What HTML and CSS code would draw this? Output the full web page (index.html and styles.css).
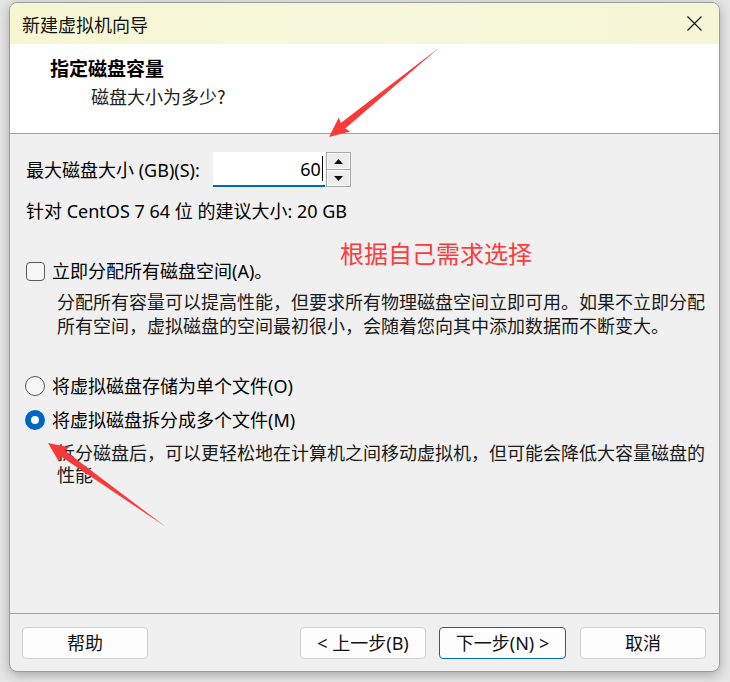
FILE: index.html
```html
<!DOCTYPE html>
<html lang="zh-CN">
<head>
<meta charset="utf-8">
<title>新建虚拟机向导</title>
<link rel="stylesheet" href="styles.css">
</head>
<body>
<div class="dialog">
  <div class="titlebar">
    <span class="title">新建虚拟机向导</span>
    <svg class="close" width="15" height="15" viewBox="0 0 15 15"><path d="M0.5 0.5 L14.5 14.5 M14.5 0.5 L0.5 14.5" stroke="#1a1a1a" stroke-width="1.3" fill="none"/></svg>
  </div>
  <div class="header">
    <div class="h-title">指定磁盘容量</div>
    <div class="h-sub">磁盘大小为多少?</div>
  </div>
  <div class="content">
    <div class="size-row">
      <span class="label">最大磁盘大小 (GB)(S):</span>
      <div class="spin">
        <div class="spin-input"><span>60</span><i class="caret"></i></div>
        <div class="spin-btns">
          <div class="sb"><svg width="9" height="5" viewBox="0 0 9 5"><path d="M0 5 L4.5 0 L9 5 Z" fill="#111"/></svg></div>
          <div class="sb"><svg width="9" height="5" viewBox="0 0 9 5"><path d="M0 0 L9 0 L4.5 5 Z" fill="#111"/></svg></div>
        </div>
      </div>
    </div>
    <div class="recommend">针对 CentOS 7 64 位 的建议大小: 20 GB</div>
    <div class="opt-row check-row"><span class="checkbox"></span><span>立即分配所有磁盘空间(A)。</span></div>
    <p class="desc d1">分配所有容量可以提高性能，但要求所有物理磁盘空间立即可用。如果不立即分配<br>所有空间，虚拟磁盘的空间最初很小，会随着您向其中添加数据而不断变大。</p>
    <div class="opt-row r1"><span class="radio"></span><span>将虚拟磁盘存储为单个文件(O)</span></div>
    <div class="opt-row r2"><span class="radio on"></span><span>将虚拟磁盘拆分成多个文件(M)</span></div>
    <p class="desc d2">拆分磁盘后，可以更轻松地在计算机之间移动虚拟机，但可能会降低大容量磁盘的<br>性能</p>
  </div>
  <div class="footer">
    <button class="btn help">帮助</button>
    <button class="btn back">&lt; 上一步(B)</button>
    <button class="btn next primary">下一步(N) &gt;</button>
    <button class="btn cancel">取消</button>
  </div>
</div>
<div class="note">根据自己需求选择</div>
<svg class="arrows" width="730" height="682" viewBox="0 0 730 682">
  <polygon points="440,47 340.8,122.9 338.8,117.4 329,137 350.2,131.4 345.2,128.4" fill="#fa3a3a"/>
  <polygon points="166,527 60.6,456.3 59.1,461.9 48,443 69.5,447.3 64.7,450.6" fill="#fa3a3a"/>
</svg>
</body>
</html>
```

FILE: styles.css
```css
* { box-sizing: border-box; }

html, body {
  margin: 0;
  padding: 0;
}

body {
  position: relative;
  width: 730px;
  height: 682px;
  overflow: hidden;
  background: #e6e6e6;
  font-family: "Noto Sans", "Noto Sans CJK SC", sans-serif;
  font-size: 18px;
  color: #000;
}

.dialog {
  margin: 2px 0 0 9px;
  width: 711px;
  height: 670px;
  border: 1px solid #9c9c9c;
  border-radius: 8px;
  background: #f0f0f0;
  overflow: hidden;
  display: flex;
  flex-direction: column;
  box-shadow: 0 3px 12px rgba(0, 0, 0, 0.28);
}

.titlebar {
  height: 41px;
  flex: none;
  display: flex;
  align-items: center;
  justify-content: space-between;
  padding: 0 17px 0 12px;
  background: linear-gradient(90deg, #f6f6d3 0%, #f7f7dc 50%, #f6f5d5 100%);
}

.title {
  font-family: "Noto Sans CJK SC", sans-serif;
  font-size: 18px;
  line-height: 20px;
  color: #111;
}

.close { display: block; }

.header {
  height: 90px;
  flex: none;
  background: #fff;
  border-bottom: 1px solid #a0a0a0;
  padding: 14px 0 0 40px;
}

.h-title {
  font-family: "Noto Sans CJK SC", sans-serif;
  font-weight: 700;
  font-size: 19px;
  line-height: 20px;
}

.h-sub {
  margin: 8px 0 0 41px;
  font-family: "Noto Sans CJK SC", sans-serif;
  font-size: 18px;
  line-height: 20px;
  color: #222;
}

.content {
  flex: 1;
  padding: 18px 0 0 16px;
}

.size-row {
  display: flex;
  align-items: center;
  height: 35px;
  gap: 13px;
}

.label, .recommend, .opt-row {
  line-height: 20px;
}

.spin {
  display: flex;
  gap: 1px;
  height: 35px;
}

.spin-input {
  width: 112px;
  height: 35px;
  background: #fff;
  border-bottom: 2px solid #0067c0;
  display: flex;
  align-items: center;
  justify-content: flex-end;
  padding-right: 2px;
  line-height: 20px;
}

.caret {
  display: block;
  width: 1px;
  height: 25px;
  background: #000;
  margin-left: 1px;
}

.spin-btns {
  width: 25px;
  height: 35px;
  border: 1px solid #a8a8a8;
  display: flex;
  flex-direction: column;
  gap: 1px;
  background: #a8a8a8;
}

.sb {
  flex: 1;
  background: #ececec;
  border: 1px solid #f8f8f8;
  display: flex;
  align-items: center;
  justify-content: center;
}

.sb svg { display: block; }

.recommend {
  margin-top: 14px;
}

.opt-row {
  display: flex;
  align-items: center;
  height: 20px;
}

.check-row {
  margin-top: 40px;
}

.checkbox {
  width: 19px;
  height: 19px;
  border: 1px solid #5a5a5a;
  border-radius: 4px;
  background: #f6f6f6;
  margin-right: 7px;
  flex: none;
}

.radio {
  width: 20px;
  height: 20px;
  border: 1px solid #5a5a5a;
  border-radius: 50%;
  background: #f6f6f6;
  margin: 0 7px 0 -1px;
  flex: none;
}

.radio.on {
  border: 6px solid #0067c0;
  background: #fff;
}

.desc {
  margin: 0 0 0 31px;
  color: #1a1a1a;
}

.d1 {
  margin-top: 9px;
  line-height: 24px;
}

.r1 { margin-top: 38px; }
.r2 { margin-top: 14px; }

.d2 {
  margin-top: 12px;
  line-height: 22px;
}

.footer {
  flex: none;
  height: 58px;
  border-top: 1px solid #a0a0a0;
  padding: 13px 13px 0 12px;
  display: flex;
  align-items: flex-start;
}

.btn {
  height: 32px;
  width: 126px;
  background: #fdfdfd;
  border: 1px solid #d0d0d0;
  border-radius: 4px;
  font-family: "Noto Sans", "Noto Sans CJK SC", sans-serif;
  font-size: 18px;
  line-height: 20px;
  color: #111;
  padding: 0;
}

.help { margin-right: auto; }
.next { width: 127px; margin-left: 13px; }
.cancel { margin-left: 14px; }

.primary {
  border-color: #0067c0;
}

.note {
  position: absolute;
  left: 340px;
  top: 240px;
  font-family: "Noto Sans CJK SC", sans-serif;
  font-size: 24px;
  line-height: 26px;
  color: #fb3c3c;
  pointer-events: none;
}

.arrows {
  position: absolute;
  left: 0;
  top: 0;
  pointer-events: none;
}
```
